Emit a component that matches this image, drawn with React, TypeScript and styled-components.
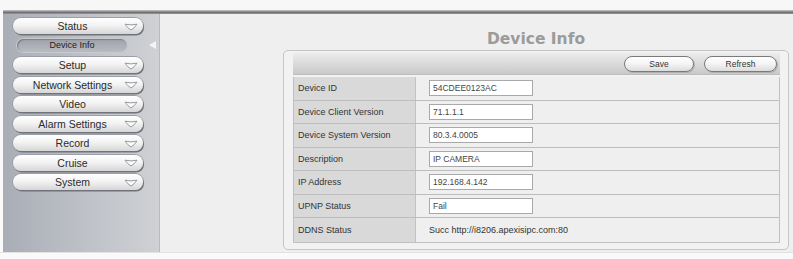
import React from 'react'
import styled, { createGlobalStyle } from 'styled-components'

const GlobalStyle = createGlobalStyle`
  html, body {
    margin: 0;
    padding: 0;
    background: #fafafa;
  }
  body {
    font-family: "Liberation Sans", Arial, sans-serif;
  }
`

const Page = styled.div`
  width: 793px;
  height: 259px;
  display: flex;
  flex-direction: column;
  background: #fafafa;
  overflow: hidden;
`

const TopStrip = styled.div`
  height: 10px;
  background: #f7f7f7;
`

const TopLine = styled.div`
  height: 4px;
  margin-left: 3px;
  background: linear-gradient(#c9c9c9, #6f6f6f 60%, #9a9a9a);
`

const Body = styled.div`
  display: flex;
  height: 238px;
  padding-left: 3px;
  border-bottom: 1px solid #e2e2e2;
`

const Sidebar = styled.div`
  width: 157px;
  flex-shrink: 0;
  background: linear-gradient(to right, #a9adb6, #bfc2c8 55%, #cfd1d4);
  box-shadow: inset -1px 0 0 #b8babd;
  padding-top: 4px;
  display: flex;
  flex-direction: column;
  gap: 3.5px;
  position: relative;
`

const NavButton = styled.div`
  margin-left: 10px;
  width: 130px;
  height: 16px;
  flex-shrink: 0;
  border-radius: 8px;
  background: linear-gradient(#ffffff, #f3f3f3 45%, #d6d6d6);
  box-shadow: 1px 1.5px 0 #70737a, 0 0 0 1px #9a9ea6;
  display: flex;
  align-items: center;
  font-size: 10.5px;
  color: #2a2a2a;
`

const NavLabel = styled.span`
  flex: 1;
  text-align: center;
  padding-left: 8px;
`

const Chevron = styled.svg`
  width: 14px;
  height: 8px;
  margin-right: 5px;
  margin-top: 1px;
`

const SubItem = styled.div`
  margin-left: 14px;
  width: 110px;
  height: 13px;
  flex-shrink: 0;
  margin-top: 1px;
  margin-bottom: 2px;
  border-radius: 7px;
  background: linear-gradient(#9ea1a8, #b8bbc1);
  box-shadow: inset 1px 1px 1px #7d8088, 0 0 0 1px #c8cace;
  display: flex;
  align-items: center;
  justify-content: center;
  font-size: 9px;
  color: #222;
`

const Pointer = styled.div`
  position: absolute;
  right: 4px;
  top: 27px;
  width: 0;
  height: 0;
  border-top: 4.5px solid transparent;
  border-bottom: 4.5px solid transparent;
  border-right: 7px solid #f4f4f4;
`

const Main = styled.div`
  flex: 1;
  background: #efefef;
  display: flex;
  flex-direction: column;
  align-items: flex-end;
  padding-right: 4px;
`

const Title = styled.h1`
  margin: 15px 0 0;
  width: 506px;
  text-align: center;
  font-family: "DejaVu Sans", Verdana, sans-serif;
  font-size: 15.5px;
  font-weight: bold;
  color: #9b9b9b;
  height: 21px;
  line-height: 21px;
`

const Panel = styled.div`
  width: 506px;
  height: 200px;
  box-sizing: border-box;
  border: 1px solid #c6c6c6;
  border-radius: 5px;
  background: #f2f2f2;
  padding: 2px 8px 0 9px;
`

const HeaderBar = styled.div`
  height: 21px;
  background: linear-gradient(#ececec, #dadada 50%, #c9c9c9);
  border-bottom: 1px solid #bdbdbd;
  display: flex;
  align-items: center;
  justify-content: flex-end;
  gap: 10px;
  padding-right: 3px;
`

const ActionButton = styled.div<{ $w: number }>`
  width: ${p => p.$w}px;
  height: 16px;
  box-sizing: border-box;
  border: 1px solid #7a7a7a;
  border-radius: 8px;
  background: linear-gradient(#ffffff, #f4f4f4 50%, #dcdcdc);
  box-shadow: 1px 1px 0 #b0b0b0;
  display: flex;
  align-items: center;
  justify-content: center;
  font-size: 8.5px;
  color: #333;
`

const Table = styled.div`
  margin-top: 2px;
  border: 1px solid #c0c0c0;
  border-top: none;
  display: grid;
  grid-template-columns: 122px 1fr;
`

const LabelCell = styled.div<{ $last?: boolean }>`
  height: 23.5px;
  box-sizing: border-box;
  border-bottom: ${p => (p.$last ? 'none' : '1px solid #bdbdbd')};
  border-right: 1px solid #c2c2c2;
  background: #d9d9d9;
  display: flex;
  align-items: center;
  padding-left: 4px;
  font-size: 9px;
  color: #333;
`

const ValueCell = styled.div<{ $last?: boolean }>`
  height: 23.5px;
  box-sizing: border-box;
  border-bottom: ${p => (p.$last ? 'none' : '1px solid #bdbdbd')};
  background: #efefef;
  display: flex;
  align-items: center;
  padding-left: 13px;
  font-size: 9px;
  color: #333;
`

const Field = styled.div`
  width: 104px;
  height: 16px;
  box-sizing: border-box;
  border: 1px solid #a9a9a9;
  background: #ffffff;
  display: flex;
  align-items: center;
  padding-left: 3px;
  font-size: 8.5px;
  color: #444;
`

const navItems = [
  'Status',
  'Setup',
  'Network Settings',
  'Video',
  'Alarm Settings',
  'Record',
  'Cruise',
  'System',
]

const rows: { label: string; value: string; field: boolean }[] = [
  { label: 'Device ID', value: '54CDEE0123AC', field: true },
  { label: 'Device Client Version', value: '71.1.1.1', field: true },
  { label: 'Device System Version', value: '80.3.4.0005', field: true },
  { label: 'Description', value: 'IP CAMERA', field: true },
  { label: 'IP Address', value: '192.168.4.142', field: true },
  { label: 'UPNP Status', value: 'Fail', field: true },
  { label: 'DDNS Status', value: 'Succ http://i8206.apexisipc.com:80', field: false },
]

const ChevronIcon = () => (
  <Chevron viewBox="0 0 14 8">
    <path
      d="M1 1.2 Q7 2.6 13 1.2 Q10 5.5 7 7 Q4 5.5 1 1.2 Z"
      fill="#fbfbfb"
      stroke="#8d9096"
      strokeWidth="0.9"
      strokeLinejoin="round"
    />
  </Chevron>
)

const App = () => (
  <>
    <GlobalStyle />
    <Page>
      <TopStrip />
      <TopLine />
      <Body>
        <Sidebar>
          {navItems.map(item => (
            <React.Fragment key={item}>
              <NavButton>
                <NavLabel>{item}</NavLabel>
                <ChevronIcon />
              </NavButton>
              {item === 'Status' && <SubItem>Device Info</SubItem>}
            </React.Fragment>
          ))}
          <Pointer />
        </Sidebar>
        <Main>
          <Title>Device Info</Title>
          <Panel>
            <HeaderBar>
              <ActionButton $w={70}>Save</ActionButton>
              <ActionButton $w={73}>Refresh</ActionButton>
            </HeaderBar>
            <Table>
              {rows.map((r, i) => {
                const last = i === rows.length - 1
                return (
                  <React.Fragment key={r.label}>
                    <LabelCell $last={last}>{r.label}</LabelCell>
                    <ValueCell $last={last}>
                      {r.field ? <Field>{r.value}</Field> : r.value}
                    </ValueCell>
                  </React.Fragment>
                )
              })}
            </Table>
          </Panel>
        </Main>
      </Body>
    </Page>
  </>
)

export default App
